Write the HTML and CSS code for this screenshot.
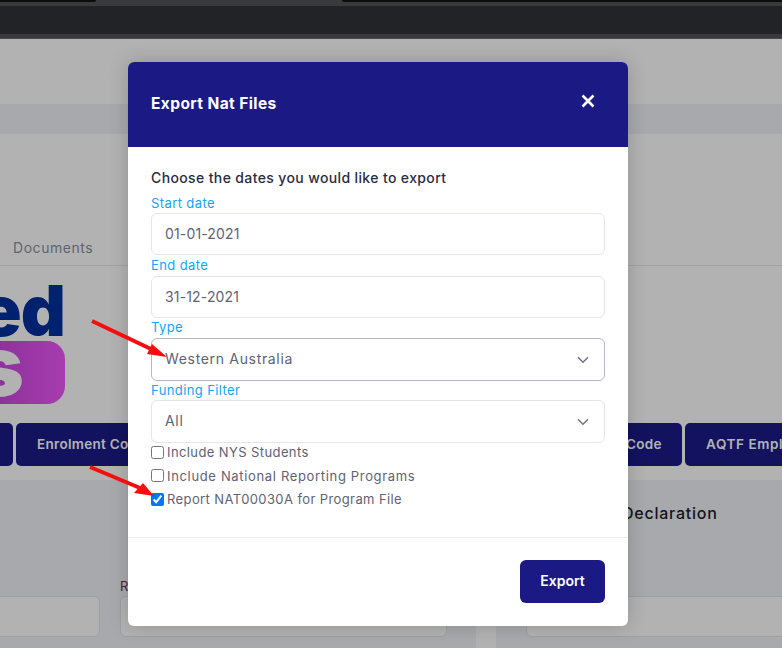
FILE: index.html
```html
<!DOCTYPE html>
<html>
<head>
  <title>Export Nat Files</title>
  <link rel="stylesheet" href="styles.css">
</head>
<body>
  <div class="browser-bar">
    <div class="tab-strip">
      <span class="tab-dark tab-left"></span>
      <span class="tab-dark tab-right"></span>
    </div>
    <div class="address-row"></div>
  </div>

  <div class="page">
    <div class="hero"></div>
    <div class="band"></div>
    <div class="tabs"><span class="tab-link">Documents</span></div>

    <div class="logo">
      <div class="logo-word"><span>ed</span></div>
      <div class="logo-badge"><span>s</span></div>
    </div>

    <div class="action-row">
      <button class="action action-first"></button>
      <button class="action action-enrol">Enrolment Code</button>
      <button class="action action-code">Code</button>
      <button class="action action-aqtf">AQTF Employer</button>
    </div>

    <div class="cards">
      <div class="card card-left">
        <div class="field-box"></div>
        <div class="field-rto">
          <span class="rto-label">RTO</span>
          <div class="field-box"></div>
        </div>
      </div>
      <div class="card card-right">
        <h3 class="card-title">Declaration</h3>
        <div class="field-box"></div>
      </div>
    </div>
  </div>

  <div class="overlay">
    <div class="modal">
      <div class="modal-header">
        <h2>Export Nat Files</h2>
        <svg class="close-icon" width="14" height="14" viewBox="0 0 14 14">
          <path d="M1.5 1.5 L12.5 12.5 M12.5 1.5 L1.5 12.5" stroke="#fff" stroke-width="2.6" fill="none"/>
        </svg>
      </div>

      <div class="modal-body">
        <p class="lead">Choose the dates you would like to export</p>

        <label class="field-label label-start">Start date</label>
        <div class="control control-date">01-01-2021</div>

        <label class="field-label label-end">End date</label>
        <div class="control control-date">31-12-2021</div>

        <label class="field-label label-type">Type</label>
        <div class="control control-select control-focus">
          Western Australia
          <svg class="chevron" width="12" height="8" viewBox="0 0 12 8"><path d="M1 1.2 L6 6.2 L11 1.2" stroke="#6f7283" stroke-width="1.5" fill="none"/></svg>
        </div>

        <label class="field-label label-funding">Funding Filter</label>
        <div class="control control-select">
          All
          <svg class="chevron" width="12" height="8" viewBox="0 0 12 8"><path d="M1 1.2 L6 6.2 L11 1.2" stroke="#6f7283" stroke-width="1.5" fill="none"/></svg>
        </div>

        <div class="checks">
          <label class="check"><input type="checkbox">Include NYS Students</label>
          <label class="check check-wide"><input type="checkbox">Include National Reporting Programs</label>
          <label class="check"><input type="checkbox" checked>Report NAT00030A for Program File</label>
        </div>
      </div>

      <div class="modal-footer">
        <button class="export-btn">Export</button>
      </div>
    </div>
  </div>

  <svg class="arrows" width="782" height="648" viewBox="0 0 782 648">
    <path d="M92 321 L151 349" stroke="#f70d0d" stroke-width="4" fill="none"/>
    <path d="M167 357 L147 354 L152 344 Z" fill="#f70d0d"/>
    <path d="M90 467 L140 488" stroke="#f70d0d" stroke-width="4" fill="none"/>
    <path d="M154 496 L134 493 L143 483 Z" fill="#f70d0d"/>
  </svg>
</body>
</html>
```

FILE: styles.css
```css
body {
  margin: 0;
  width: 782px;
  height: 648px;
  overflow: hidden;
  position: relative;
  font-family: Inter, "Noto Sans", sans-serif;
  background: #fff;
}

/* browser chrome */
.browser-bar {
  height: 39px;
  background: #3a3a3c;
  border-bottom: 1px solid #4a4a4a;
  box-sizing: border-box;
}
.tab-strip {
  height: 6px;
  position: relative;
}
.tab-dark {
  position: absolute;
  top: 0;
  height: 2px;
  background: #0c0c0c;
}
.tab-left {
  left: 0;
  width: 96px;
  border-bottom-right-radius: 4px;
}
.tab-right {
  left: 342px;
  right: 0;
  border-bottom-left-radius: 4px;
}
.address-row {
  height: 28px;
  background: #222327;
}

/* page behind the dialog */
.page {
  color: #1c1c2b;
  overflow: hidden;
}
.hero {
  height: 65px;
}
.band {
  height: 30px;
  background: #f1f3f6;
}
.tabs {
  height: 132px;
  box-sizing: border-box;
  border-bottom: 1px solid #e9eaee;
  padding: 103px 0 0 13px;
  line-height: 20px;
}
.tab-link {
  font-size: 14px;
  letter-spacing: 0.55px;
  color: #8a8fa3;
}
.logo {
  width: 65px;
  padding-top: 18px;
  overflow: hidden;
}
.logo-word {
  height: 57px;
  display: flex;
  justify-content: flex-end;
  font-size: 70px;
  line-height: 53px;
  font-weight: 900;
  letter-spacing: -1px;
  color: #00309e;
  white-space: nowrap;
}
.logo-badge {
  height: 63px;
  border-radius: 0 18px 18px 0;
  background: linear-gradient(90deg, #cb49e0, #f056fb);
  overflow: hidden;
  display: flex;
  justify-content: flex-end;
}
.logo-badge span {
  color: #fff;
  font-size: 84px;
  font-weight: 900;
  line-height: 50px;
  padding-right: 41px;
}
.action-row {
  display: flex;
  gap: 3px;
  margin-top: 19px;
  margin-left: -40px;
}
.action {
  height: 43px;
  border: 0;
  border-radius: 5px;
  background: #1a1a89;
  color: #fff;
  font-family: inherit;
  font-size: 13.5px;
  font-weight: 600;
  letter-spacing: 0.3px;
  white-space: nowrap;
  padding: 0 0 2px;
  flex: none;
  text-align: left;
}
.action-first {
  width: 53px;
}
.action-enrol {
  width: 370px;
  padding-left: 21px;
}
.action-code {
  width: 293px;
  padding-left: 237px;
}
.action-aqtf {
  width: 140px;
  padding-left: 21px;
  letter-spacing: 0.6px;
}
.cards {
  display: grid;
  grid-template-columns: 476px 1fr;
  gap: 20px;
  margin-top: 14px;
  height: 168px;
}
.card {
  background: #f1f3f6;
}
.card-left {
  display: grid;
  grid-template-columns: 100px 327px;
  gap: 20px;
  align-items: end;
  padding-bottom: 11px;
}
.field-box {
  height: 41px;
  background: #fff;
  border: 1px solid #e4e5ef;
  border-radius: 6px;
  box-sizing: border-box;
}
.card-left > .field-box {
  margin-left: -10px;
}
.rto-label {
  display: block;
  font-size: 13px;
  line-height: 16px;
  letter-spacing: 1px;
  margin-bottom: 2px;
  color: #7c2c46;
}
.card-right {
  padding: 23px 0 0 30px;
}
.card-title {
  margin: 0 0 73px;
  padding-left: 96px;
  font-size: 16px;
  line-height: 20px;
  font-weight: 500;
  letter-spacing: 0.75px;
}
.card-right .field-box {
  margin-right: -10px;
}

/* dialog */
.overlay {
  position: absolute;
  left: 0;
  right: 0;
  top: 39px;
  bottom: 0;
  background: rgba(0, 0, 0, 0.3);
  padding: 23px 0 0 128px;
}
.modal {
  width: 500px;
  height: 564px;
  background: #fff;
  border-radius: 6px;
  box-shadow: 0 0 20px rgba(0, 0, 0, 0.18);
  overflow: hidden;
}
.modal-header {
  height: 85px;
  background: #1b1a85;
  display: flex;
  align-items: center;
  justify-content: space-between;
  padding: 0 33px 0 23px;
}
.modal-header h2 {
  margin: 0 0 2px;
  font-size: 15.5px;
  line-height: 20px;
  font-weight: 700;
  letter-spacing: 0.4px;
  color: #fff;
}
.close-icon {
  margin-top: -7px;
}
.modal-body {
  height: 391px;
  padding: 0 23px;
  box-sizing: border-box;
  border-bottom: 1px solid #ececf2;
}
.lead {
  margin: 0;
  padding-top: 21px;
  font-size: 14px;
  line-height: 20px;
  font-weight: 500;
  letter-spacing: 0.37px;
  color: #2a2c40;
}
.field-label {
  display: block;
  font-size: 13px;
  line-height: 16px;
  letter-spacing: 0.4px;
  color: #16a3fb;
}
.label-start {
  margin-top: 7px;
  height: 18px;
}
.label-end {
  margin-top: 2px;
  height: 19px;
}
.label-type {
  margin-top: 1px;
  height: 19px;
}
.label-funding {
  margin-top: 1px;
  height: 18px;
}
.control {
  position: relative;
  height: 42px;
  box-sizing: border-box;
  border: 1px solid #e4e4f1;
  border-radius: 6px;
  padding-left: 13px;
  font-size: 14px;
  line-height: 40px;
  letter-spacing: 0.67px;
  color: #5f6275;
}
.control-date {
  letter-spacing: 0.15px;
}
.control-select {
  height: 43px;
}
.control-focus {
  border-color: #b7b4cc;
}
.chevron {
  position: absolute;
  right: 15px;
  top: 17px;
}
.checks {
  display: flex;
  flex-direction: column;
  gap: 5.5px;
}
.check {
  height: 18px;
  display: flex;
  align-items: center;
  font-size: 13px;
  letter-spacing: 0.4px;
  color: #5f6275;
}
.check-wide {
  letter-spacing: 0.66px;
}
.check input {
  margin: 0 3px 0 0;
}
.modal-footer {
  display: flex;
  justify-content: flex-end;
  padding: 22px 23px 0 0;
}
.export-btn {
  width: 85px;
  height: 43px;
  border: 0;
  border-radius: 6px;
  padding: 0 0 2px;
  background: #1b1a85;
  color: #fff;
  font-family: inherit;
  font-size: 14px;
  font-weight: 600;
}

.arrows {
  position: absolute;
  left: 0;
  top: 0;
  pointer-events: none;
}
```
